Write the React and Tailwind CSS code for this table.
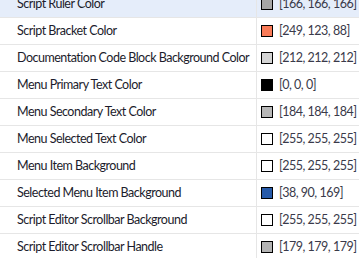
import React from 'react';

const ROWS = [
  { label: 'Script Ruler Color', rgb: [166, 166, 166], active: true },
  { label: 'Script Bracket Color', rgb: [249, 123, 88] },
  { label: 'Documentation Code Block Background Color', rgb: [212, 212, 212] },
  { label: 'Menu Primary Text Color', rgb: [0, 0, 0] },
  { label: 'Menu Secondary Text Color', rgb: [184, 184, 184] },
  { label: 'Menu Selected Text Color', rgb: [255, 255, 255] },
  { label: 'Menu Item Background', rgb: [255, 255, 255] },
  { label: 'Selected Menu Item Background', rgb: [38, 90, 169] },
  { label: 'Script Editor Scrollbar Background', rgb: [255, 255, 255] },
  { label: 'Script Editor Scrollbar Handle', rgb: [179, 179, 179] },
];

export default function App() {
  return (
    <div className="w-[359px] h-[258px] overflow-hidden bg-white" style={{ fontFamily: 'Lato, "Noto Sans", sans-serif' }}>
      <div className="-mt-[9px]">
        {ROWS.map((row) => (
          <div
            key={row.label}
            className={`flex h-[27px] border-b border-[#e6e6e6] text-[12.5px] tracking-[-0.5px] ${row.active ? 'bg-[#e5edfa]' : 'bg-white'}`}
          >
            <div className="w-[257px] shrink-0 flex items-center pl-[17px] border-r border-[#e6e6e6] text-[#1c1c2c] whitespace-nowrap overflow-hidden">
              {row.label}
            </div>
            <div className="flex items-center pl-[4px] gap-[6px] text-[#3a3a4a] whitespace-nowrap">
              <span
                className="w-[12px] h-[12px] border border-black shrink-0"
                style={{ backgroundColor: `rgb(${row.rgb.join(',')})` }}
              />
              <span>[{row.rgb.join(', ')}]</span>
            </div>
          </div>
        ))}
      </div>
    </div>
  );
}
